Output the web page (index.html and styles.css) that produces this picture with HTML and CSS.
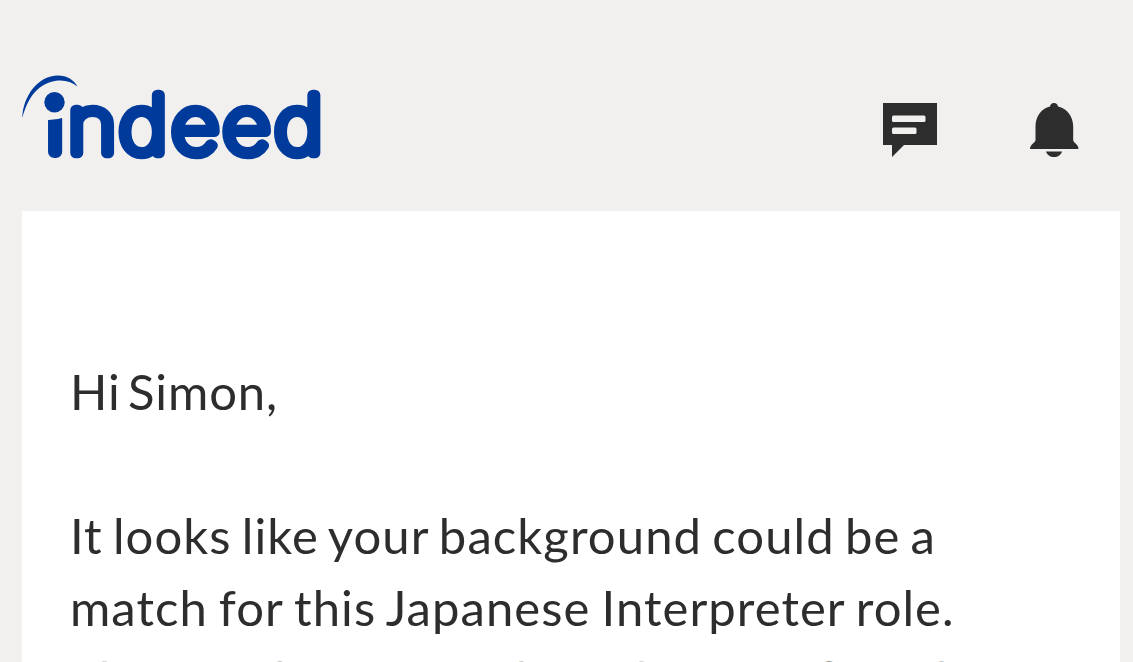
FILE: index.html
```html
<!DOCTYPE html>
<html lang="en">
<head>
    <meta charset="UTF-8">
    <meta name="viewport" content="width=device-width, initial-scale=1.0">
    <title>Indeed</title>
    <link rel="stylesheet" href="styles.css">
</head>
<body>
    <header class="header">
        <svg class="logo" width="304" height="90" viewBox="20 72 304 90">
            <text class="logo-text" transform="scale(1.06 1)"><tspan class="logo-i" x="45.500" y="152">i</tspan><tspan x="64 112 161.500 209.900 258.800" y="153.300">ndeed</tspan></text>
            <circle class="logo-gap" cx="54.500" cy="102" r="14.500"/>
            <path class="logo-slit" d="M46 117Q55 117.500 64 114.500"/>
            <circle cx="54.500" cy="102.300" r="10.200"/>
            <path d="M22.300 118C23 96 38 75.500 58 75.500C67 75.500 74 80 77.500 86.500C72 82 66 80 58 80.500C40 82 28 96 22.300 118Z"/>
        </svg>
        <nav class="icons">
            <svg width="56" height="56" viewBox="882 102 56 56">
                <path d="M883 103h54v42h-33l-12 12v-12h-9z"/>
                <rect class="icon-line" x="892" y="115.500" width="33.500" height="6.500" rx="1.500"/>
                <rect class="icon-line" x="892" y="127.500" width="24.500" height="6.500" rx="1.500"/>
            </svg>
            <svg width="50" height="56" viewBox="1029 102 50 56">
                <path d="M1054 103c2.500 0 3.500 1.500 4 3.500c9 2 15.200 10 15.200 20v13.500c0 3 5.300 4 5.300 9h-48.500c0-5 5.500-6 5.500-9v-13.500c0-10 6-18 14.500-20c.5-2 1.500-3.500 4-3.500z"/>
                <path d="M1046 151.500h16c-1 3.500-4 5.500-8 5.500s-7-2-8-5.500z"/>
            </svg>
        </nav>
    </header>
    <main class="card">
        <p class="greeting">Hi Simon,</p>
        <p>
            <span class="line line-1">It looks like your background could be a</span>
            <span class="line line-2">match for this Japanese Interpreter role.</span>
            <span class="line line-3">Please submit a quick application if you have</span>
        </p>
    </main>
</body>
</html>
```
FILE: styles.css
```css
body {
    margin: 0;
    height: 662px;
    overflow: hidden;
    background-color: #f2f0ee;
    font-family: Lato, "Noto Sans", sans-serif;
    color: #2d2d2d;
}

.header {
    display: flex;
    justify-content: space-between;
    align-items: flex-start;
    height: 139px;
    padding: 72px 54px 0 20px;
}

.logo {
    fill: #003a9b;
}

.logo-text {
    font-family: Inter, "Liberation Sans", sans-serif;
    font-size: 79px;
    font-weight: 100;
    stroke: #003a9b;
    stroke-width: 10.5px;
    stroke-linejoin: round;
}

.logo-i {
    font-size: 60px;
    stroke-width: 12px;
}

.logo-gap {
    fill: #f2f0ee;
}

.logo-slit {
    fill: none;
    stroke: #f2f0ee;
    stroke-width: 6px;
}

.icons {
    display: flex;
    gap: 91px;
    padding-top: 30px;
    fill: #2d2d2d;
}

.icon-line {
    fill: #f2f0ee;
}

.card {
    box-sizing: border-box;
    height: 451px;
    margin: 0 13px 0 22px;
    padding: 144px 48px 0;
    overflow: hidden;
    background-color: #fff;
}

p {
    margin: 0 0 72px;
    font-size: 49px;
    line-height: 72px;
}

.greeting {
    letter-spacing: 0.9px;
    word-spacing: -6px;
}

.line {
    display: block;
    white-space: nowrap;
}

.line-1 {
    letter-spacing: 1.1px;
    word-spacing: -3.5px;
}

.line-2 {
    letter-spacing: 1.05px;
    word-spacing: -2.5px;
}

.line-3 {
    padding-top: 1px;
    font-family: "Noto Sans", sans-serif;
    font-size: 48px;
    letter-spacing: -0.8px;
}
```
